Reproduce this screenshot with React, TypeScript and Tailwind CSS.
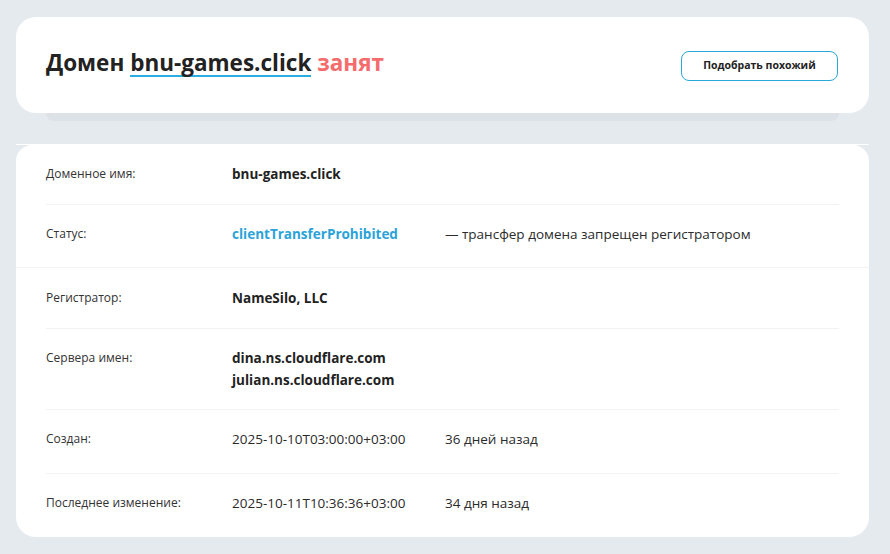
const font = { fontFamily: '"Open Sans", "Noto Sans", sans-serif' };

type Row = {
  label: string;
  values: React.ReactNode;
  extra?: string;
  pad: string;
  divider?: "inset" | "full" | "none";
};

const rows: Row[] = [
  {
    label: "Доменное имя:",
    values: <span className="font-bold text-[#222]">bnu-games.click</span>,
    pad: "pt-[18px] pb-[19px]",
    divider: "inset",
  },
  {
    label: "Статус:",
    values: <span className="font-bold text-[#2aa3d8]">clientTransferProhibited</span>,
    extra: "— трансфер домена запрещен регистратором",
    pad: "pt-[18px] pb-[22px]",
    divider: "full",
  },
  {
    label: "Регистратор:",
    values: <span className="font-bold text-[#222]">NameSilo, LLC</span>,
    pad: "pt-[19px] pb-[19px]",
    divider: "inset",
  },
  {
    label: "Сервера имен:",
    values: (
      <div className="flex flex-col font-bold text-[#222]">
        <span>dina.ns.cloudflare.com</span>
        <span>julian.ns.cloudflare.com</span>
      </div>
    ),
    pad: "pt-[18px] pb-[18px]",
    divider: "inset",
  },
  {
    label: "Создан:",
    values: <span className="text-[#2b2b2b]">2025-10-10T03:00:00+03:00</span>,
    extra: "36 дней назад",
    pad: "pt-[18px] pb-[23px]",
    divider: "inset",
  },
  {
    label: "Последнее изменение:",
    values: <span className="text-[#2b2b2b]">2025-10-11T10:36:36+03:00</span>,
    extra: "34 дня назад",
    pad: "pt-[18px] pb-[23px]",
    divider: "none",
  },
];

function InfoRow({ row }: { row: Row }) {
  return (
    <div className={row.divider === "full" ? "border-b border-[#f1f2f3]" : ""}>
      <div
        className={`mx-[30px] flex items-start ${row.pad} ${
          row.divider === "inset" ? "border-b border-[#f1f2f3]" : ""
        }`}
      >
        <div className="w-[186px] shrink-0 pt-[1px] text-[12px] leading-[20px] text-[#333]">{row.label}</div>
        <div className="w-[213px] shrink-0 text-[13.5px] leading-[22px]">{row.values}</div>
        {row.extra && <div className="text-[13.5px] leading-[22px] text-[#2b2b2b]">{row.extra}</div>}
      </div>
    </div>
  );
}

export default function App() {
  return (
    <div className="min-h-[554px] w-[890px] bg-[#e5eaee] pl-[16px] pr-[21px] pt-[17px] pb-[17px]" style={font}>
      <div className="flex h-[96px] items-center justify-between rounded-[20px] bg-white pl-[30px] pr-[31px]">
        <h1 className="mb-[4px] text-[22.5px] font-bold leading-[32px] text-[#222]">
          Домен{" "}
          <span className="inline-block border-b-2 border-[#2aade2] leading-[24px]">bnu-games.click</span>{" "}
          <span className="text-[#f56c6c]">занят</span>
        </h1>
        <button className="mt-[2px] h-[30px] w-[157px] rounded-[8px] border border-[#2aa8d9] bg-white text-[10.5px] font-bold text-[#222]">
          Подобрать похожий
        </button>
      </div>
      <div className="mx-[30px] h-[8px] rounded-b-[8px] bg-[#dde2e7]" />

      <div className="mt-[23px] h-px bg-white" />
      <div className="rounded-b-[20px] rounded-t-[16px] bg-white">
        {rows.map((row) => (
          <InfoRow key={row.label} row={row} />
        ))}
      </div>
    </div>
  );
}
